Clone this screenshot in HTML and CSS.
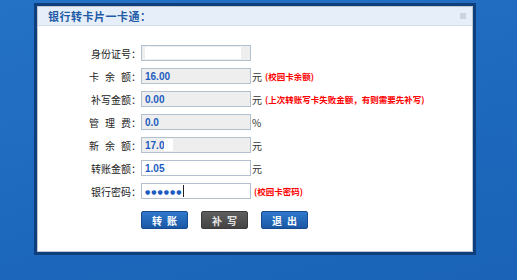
FILE: index.html
```html
<!DOCTYPE html>
<html lang="zh-CN">
<head>
    <meta charset="UTF-8">
    <title>银行转卡片一卡通</title>
    <link rel="stylesheet" href="styles.css">
</head>
<body>
    <div class="window">
        <div class="panel">
            <div class="title-bar">
                <span class="title">银行转卡片一卡通：</span>
                <span class="min-box"></span>
            </div>
            <div class="form">
                <div class="row">
                    <label class="label">身份证号：</label>
                    <span class="field readonly"><span class="mask wide"></span></span>
                </div>
                <div class="row">
                    <label class="label"><span class="spread">卡余</span>额：</label>
                    <span class="field readonly">16.00</span>
                    <span class="unit">元</span>
                    <span class="note">(校园卡余额)</span>
                </div>
                <div class="row">
                    <label class="label">补写金额：</label>
                    <span class="field readonly">0.00</span>
                    <span class="unit">元</span>
                    <span class="note">(上次转账写卡失败金额，有则需要先补写)</span>
                </div>
                <div class="row">
                    <label class="label"><span class="spread">管理</span>费：</label>
                    <span class="field readonly">0.0</span>
                    <span class="unit">%</span>
                </div>
                <div class="row">
                    <label class="label"><span class="spread">新余</span>额：</label>
                    <span class="field readonly">17.0<span class="mask small"></span></span>
                    <span class="unit">元</span>
                </div>
                <div class="row">
                    <label class="label">转账金额：</label>
                    <span class="field">1.05</span>
                    <span class="unit">元</span>
                </div>
                <div class="row">
                    <label class="label">银行密码：</label>
                    <span class="field"><span class="dots">●●●●●●</span><span class="caret"></span></span>
                    <span class="note">(校园卡密码)</span>
                </div>
                <div class="buttons">
                    <button class="btn">转账</button>
                    <button class="btn grey">补写</button>
                    <button class="btn">退出</button>
                </div>
            </div>
        </div>
    </div>
</body>
</html>
```

FILE: styles.css
```css
body {
    margin: 0;
    height: 280px;
    overflow: hidden;
    background: linear-gradient(165deg, #2472c6 0%, #1d69bd 55%, #1a63b6 100%);
    font-family: "Noto Sans CJK SC", "Liberation Sans", sans-serif;
}
.window {
    margin: 3px 0 0 34px;
    width: 436px;
    height: 246px;
    border: 3px solid #0f3e7c;
    background-color: #fff;
}
.panel {
    height: 244px;
    border: 1px solid #bcc7d3;
    background-color: #fff;
}
.title-bar {
    display: flex;
    align-items: center;
    justify-content: space-between;
    height: 18px;
    padding: 0 6px 0 10px;
    background-color: #e6eff9;
    border-bottom: 1px solid #d3deea;
}
.title {
    font-size: 11px;
    font-weight: bold;
    color: #1f5ba6;
    letter-spacing: 0.5px;
}
.min-box {
    width: 6px;
    height: 6px;
    background-color: #c9d5e2;
}
.form {
    display: flex;
    flex-direction: column;
    gap: 7px;
    padding-top: 19px;
}
.row {
    display: flex;
    align-items: center;
    height: 16px;
}
.label {
    width: 103px;
    text-align: right;
    font-size: 10px;
    color: #222;
}
.spread {
    letter-spacing: 6px;
}
.field {
    display: flex;
    align-items: center;
    box-sizing: border-box;
    width: 110px;
    height: 16px;
    padding-left: 3px;
    border: 1px solid #b3c0cf;
    background-color: #fff;
    font-family: "Liberation Sans", sans-serif;
    font-size: 10px;
    font-weight: bold;
    color: #1c5cc0;
}
.field.readonly {
    background-color: #eeeeee;
}
.mask {
    display: inline-block;
    height: 12px;
    background-color: #fff;
}
.mask.wide {
    width: 96px;
}
.mask.small {
    width: 9px;
}
.dots {
    font-family: "DejaVu Sans", sans-serif;
    font-size: 6px;
    letter-spacing: 1px;
    color: #1c5cc0;
}
.caret {
    width: 1px;
    height: 12px;
    margin-left: 1px;
    background-color: #222;
}
.unit {
    margin-left: 1px;
    font-size: 10px;
    color: #333;
}
.note {
    margin-left: 3px;
    font-size: 8.5px;
    font-weight: bold;
    color: #f00;
}
.buttons {
    display: flex;
    gap: 13px;
    margin-top: 5px;
    padding-left: 103px;
}
.btn {
    width: 47px;
    height: 18px;
    padding: 0;
    border: 1px solid #174a8c;
    border-radius: 2px;
    background: linear-gradient(#2e78cb, #1a58a6);
    font-family: "Noto Sans CJK SC", sans-serif;
    font-size: 10px;
    font-weight: bold;
    letter-spacing: 5px;
    text-indent: 5px;
    color: #fff;
}
.btn.grey {
    border-color: #3a3a3a;
    background: linear-gradient(#5e5e5e, #444);
    color: #e4e4e4;
}
```
